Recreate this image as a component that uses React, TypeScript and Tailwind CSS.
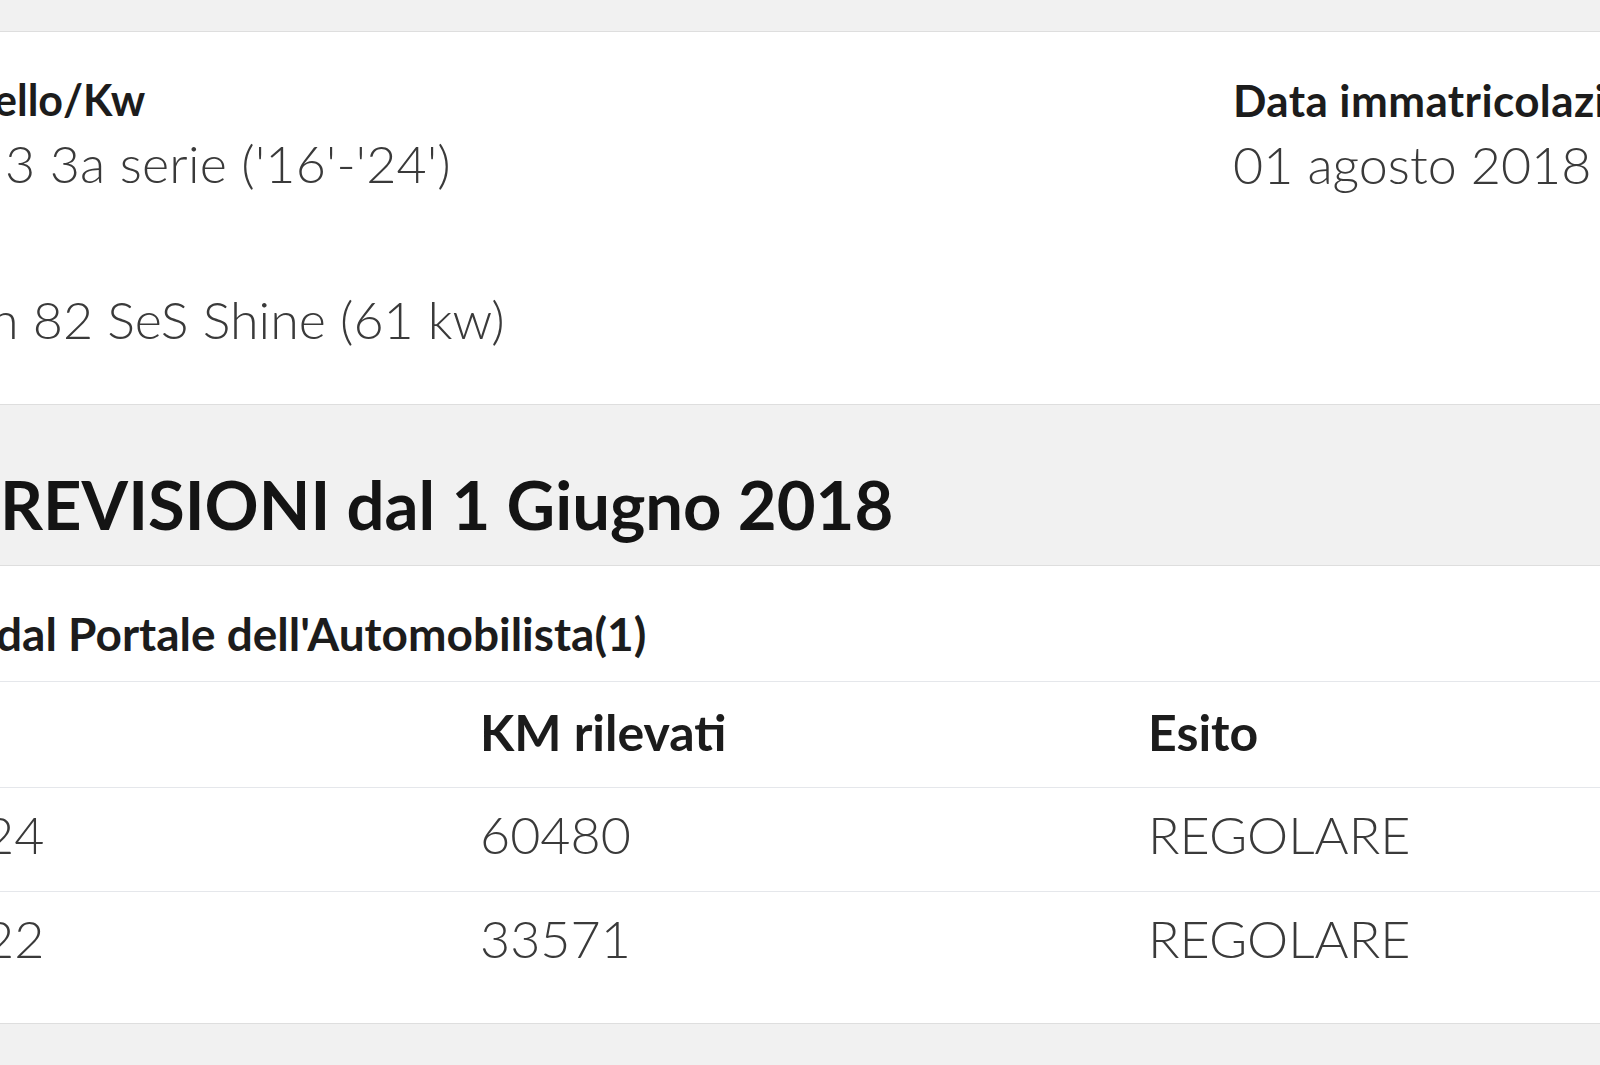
import React from "react";

const F = "font-['Lato',sans-serif]";

export default function App() {
  return (
    <div className={`${F} w-[1600px] h-[1065px] overflow-hidden bg-[#f1f1f1]`}>
      {/* top gray strip */}
      <div className="h-[32px] bg-[#f1f1f1] border-b border-[#dedede]" />

      {/* vehicle data */}
      <section className="bg-white h-[373px] border-b border-[#dedede] flex">
        <div className="w-[1233px] pt-[46px]">
          <div className="text-[43px] leading-none font-bold text-[#1c1c1c] whitespace-nowrap -ml-[6px]">ello/Kw</div>
          <div className="mt-[16px] text-[52px] leading-none font-light text-[#3a3a3a] whitespace-nowrap pl-[5px] tracking-[0.2px]">
            3 3a serie ('16'-'24')
          </div>
          <div className="mt-[104px] text-[52px] leading-none font-light text-[#3a3a3a] whitespace-nowrap -ml-[10px]">
            n 82 SeS Shine (61 kw)
          </div>
        </div>
        <div className="flex-1 pt-[46px] min-w-0">
          <div className="text-[44px] leading-none font-bold text-[#1c1c1c] whitespace-nowrap tracking-[0.4px]">Data immatricolazione</div>
          <div className="mt-[16px] text-[52px] leading-none font-light text-[#3a3a3a] whitespace-nowrap">01 agosto 2018</div>
        </div>
      </section>

      {/* heading */}
      <section className="h-[161px] bg-[#f1f1f1] border-b border-[#dedede] pt-[66px]">
        <h2 className="text-[67px] leading-none font-bold text-[#141414] whitespace-nowrap">REVISIONI dal 1 Giugno 2018</h2>
      </section>

      {/* table block */}
      <section className="bg-white border-b border-[#dedede]">
        <div className="h-[116px] pt-[45px] border-b border-[#e5e7eb]">
          <div className="text-[46px] leading-none font-bold text-[#1c1c1c] whitespace-nowrap -ml-[4px]">
            dal Portale dell'Automobilista(1)
          </div>
        </div>
        <div className="h-[106px] pt-[25px] border-b border-[#e5e7eb] flex text-[50px] leading-none font-bold text-[#1c1c1c]">
          <div className="w-[480px]" />
          <div className="w-[668px]">KM rilevati</div>
          <div className="flex-1">Esito</div>
        </div>
        <div className="h-[104px] pt-[20px] border-b border-[#e5e7eb] flex text-[52px] leading-none font-light text-[#3a3a3a]">
          <div className="w-[480px] -ml-[16px] mr-[16px]">24</div>
          <div className="w-[668px]">60480</div>
          <div className="flex-1">REGOLARE</div>
        </div>
        <div className="h-[131px] pt-[20px] flex text-[52px] leading-none font-light text-[#3a3a3a]">
          <div className="w-[480px] -ml-[16px] mr-[16px]">22</div>
          <div className="w-[668px]">33571</div>
          <div className="flex-1">REGOLARE</div>
        </div>
      </section>

      <div className="h-[42px] bg-[#f1f1f1]" />
    </div>
  );
}
